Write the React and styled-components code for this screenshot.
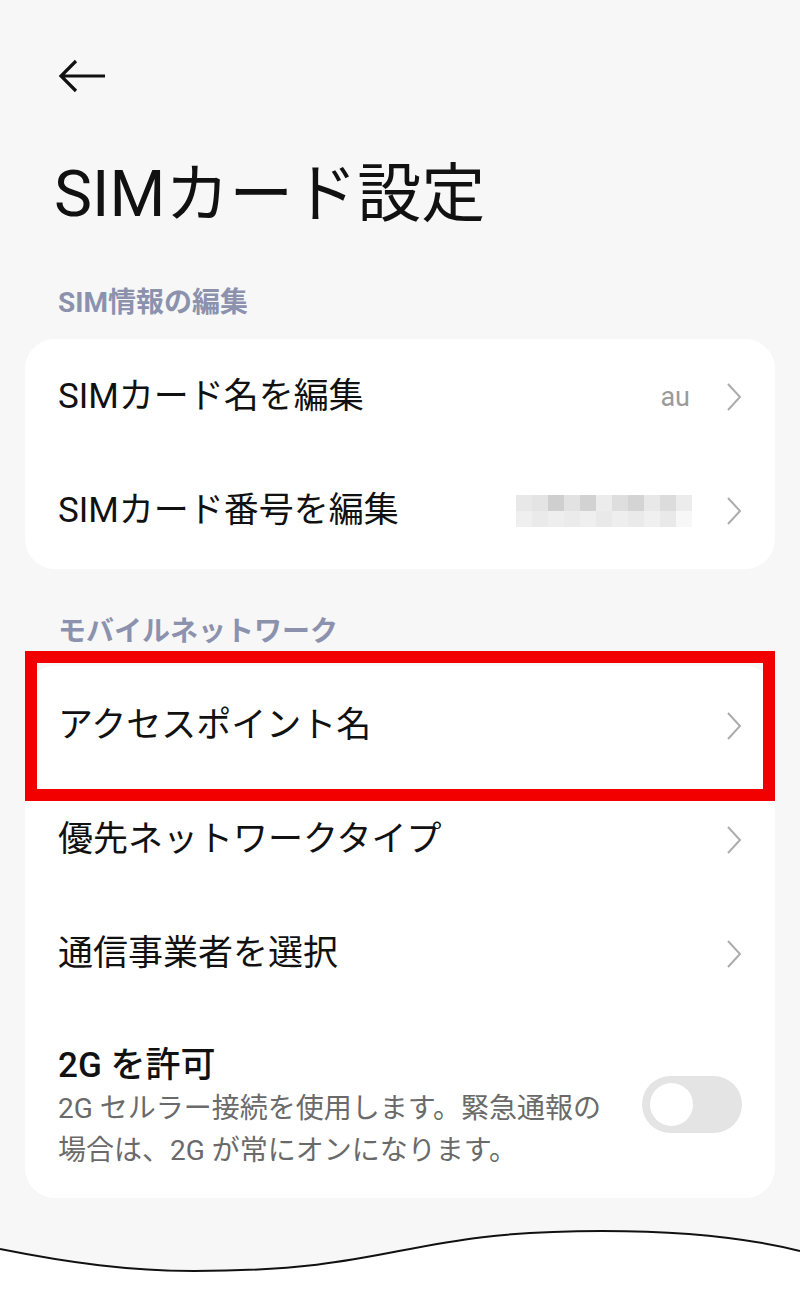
import React from "react"
import styled, {createGlobalStyle} from "styled-components"

const GlobalStyle = createGlobalStyle`
  html, body {
    margin: 0;
    padding: 0;
    background: #f7f7f7;
  }
  body {
    font-family: Roboto, "Noto Sans CJK JP", sans-serif;
    color: #111;
  }
`

const Page = styled.div`
  width: 800px;
  height: 1300px;
  overflow: hidden;
  display: flex;
  flex-direction: column;
`

const TopBar = styled.div`
  height: 36px;
  padding: 58px 0 0 58px;
  display: flex;
  align-items: center;
  flex-shrink: 0;
`

const BackButton = styled.button`
  border: 0;
  background: none;
  padding: 0;
  width: 48px;
  height: 36px;
  cursor: pointer;
`

const Title = styled.h1`
  margin: 63px 0 0 54px;
  font-size: 64px;
  font-weight: 400;
  line-height: 76px;
  letter-spacing: 0;
  flex-shrink: 0;
`

const SectionLabel = styled.div`
  margin: ${(p) => p.$top}px 0 0 58px;
  font-size: 28px;
  font-weight: 700;
  line-height: 36px;
  color: #8c92ae;
  flex-shrink: 0;
`

const Card = styled.div`
  margin: ${(p) => p.$top}px 25px 0;
  background: #fff;
  border-radius: 30px;
  padding: ${(p) => p.$pad || 0}px 0;
  flex-shrink: 0;
`

const Row = styled.div`
  position: relative;
  height: ${(p) => p.$h || 114}px;
  padding: 0 33px;
  display: flex;
  align-items: center;
  gap: 20px;

  ${(p) =>
    p.$highlight &&
    `
    &::after {
      content: "";
      position: absolute;
      left: 0;
      right: 0;
      top: -18px;
      bottom: -18px;
      border: 12px solid #f20000;
      pointer-events: none;
    }
  `}
`

const RowTitle = styled.div`
  flex: 1;
  font-size: 35px;
  line-height: 44px;
  font-weight: ${(p) => (p.$bold ? 500 : 400)};
  color: #111;
`

const Value = styled.div`
  font-size: 27px;
  color: #9a9a9a;
  margin-right: 16px;
`

const Mask = styled.div`
  display: grid;
  grid-template-columns: repeat(11, 16px);
  grid-auto-rows: 16px;
  margin-right: 14px;
`

const MaskCell = styled.div`
  background: ${(p) => p.$c};
`

const ToggleRow = styled.div`
  padding: 33px 33px 23px;
  display: flex;
  align-items: center;
  gap: 30px;
`

const ToggleText = styled.div`
  flex: 1;
`

const Sub = styled.div`
  font-size: 28px;
  line-height: 42px;
  color: #6a6a6a;
`

const Switch = styled.div`
  width: 100px;
  height: 57px;
  border-radius: 29px;
  background: #e4e4e4;
  position: relative;
  flex-shrink: 0;
  margin: 0 0 8px 2px;

  &::before {
    content: "";
    position: absolute;
    left: 8px;
    top: 7px;
    width: 43px;
    height: 43px;
    border-radius: 50%;
    background: #fff;
  }
`

const Footer = styled.svg`
  display: block;
  flex-shrink: 0;
  margin-top: 3px;
  width: 800px;
  height: 100px;
`

const Chevron = () => (
  <svg width="16" height="30" viewBox="0 0 16 30">
    <polyline points="2,2 14,15 2,28" fill="none" stroke="#acacac" strokeWidth="2" />
  </svg>
)

const maskColors = [
  ["#e8e8e8", "#e4e4e4", "#cfcfcf", "#e2e2e2", "#d2d2d2", "#ececec", "#dedede", "#d4d4d4", "#e8e8e8", "#dcdcdc", "#ececec"],
  ["#efefef", "#eaeaea", "#eeeeee", "#ebebeb", "#efefef", "#e9e9e9", "#eeeeee", "#eaeaea", "#f0f0f0", "#e9e9e9", "#f7f7f7"],
]

function MaskedValue() {
  return (
    <Mask>
      {maskColors.flat().map((c, i) => (
        <MaskCell key={i} $c={c} />
      ))}
    </Mask>
  )
}

export default function App() {
  return (
    <>
      <GlobalStyle />
      <Page>
        <TopBar>
          <BackButton aria-label="back">
            <svg width="48" height="36" viewBox="0 0 48 36">
              <path d="M3 18H47M18 3L3 18L18 33" fill="none" stroke="#111" strokeWidth="3.2" />
            </svg>
          </BackButton>
        </TopBar>
        <Title>SIMカード設定</Title>

        <SectionLabel $top={52}>SIM情報の編集</SectionLabel>
        <Card $top={18} $pad={1}>
          <Row>
            <RowTitle>SIMカード名を編集</RowTitle>
            <Value>au</Value>
            <Chevron />
          </Row>
          <Row>
            <RowTitle>SIMカード番号を編集</RowTitle>
            <MaskedValue />
            <Chevron />
          </Row>
        </Card>

        <SectionLabel $top={45}>モバイルネットワーク</SectionLabel>
        <Card $top={16} $pad={3}>
          <Row $highlight>
            <RowTitle>アクセスポイント名</RowTitle>
            <Chevron />
          </Row>
          <Row>
            <RowTitle>優先ネットワークタイプ</RowTitle>
            <Chevron />
          </Row>
          <Row>
            <RowTitle>通信事業者を選択</RowTitle>
            <Chevron />
          </Row>
          <ToggleRow>
            <ToggleText>
              <RowTitle $bold>2G を許可</RowTitle>
              <Sub>
                2G セルラー接続を使用します。緊急通報の
                <br />
                場合は、2G が常にオンになります。
              </Sub>
            </ToggleText>
            <Switch />
          </ToggleRow>
        </Card>

        <Footer viewBox="0 0 800 100" preserveAspectRatio="none">
          <path
            d="M0 48C70 62 130 70 194 70C400 70 400 30 602 30C700 30 760 40 800 50L800 100L0 100Z"
            fill="#fff"
          />
          <path
            d="M0 48C70 62 130 70 194 70C400 70 400 30 602 30C700 30 760 40 800 50"
            fill="none"
            stroke="#111"
            strokeWidth="2"
          />
        </Footer>
      </Page>
    </>
  )
}
